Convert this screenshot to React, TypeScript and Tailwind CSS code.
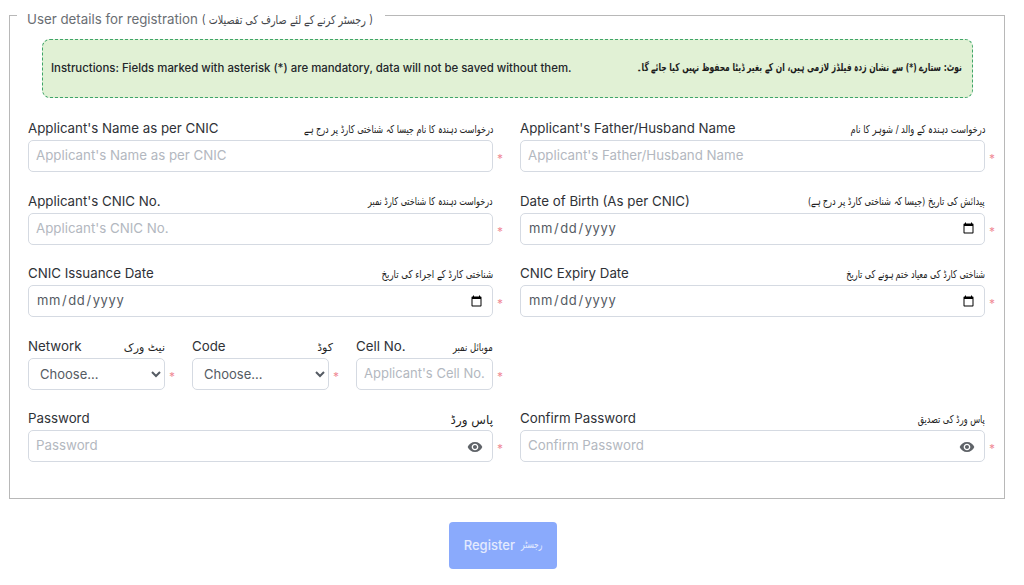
import React from 'react';

const sans = "font-['Inter','Noto_Sans',sans-serif]";
const urdu = "font-['DejaVu_Sans','Noto_Sans',sans-serif]";

function EyeIcon() {
  return (
    <svg viewBox="0 0 24 24" className="w-4 h-4 fill-[#5f6368]">
      <path d="M12 4.5C7 4.5 2.73 7.61 1 12c1.73 4.39 6 7.5 11 7.5s9.27-3.11 11-7.5c-1.73-4.39-6-7.5-11-7.5zM12 17c-2.76 0-5-2.24-5-5s2.24-5 5-5 5 2.24 5 5-2.24 5-5 5zm0-8c-1.66 0-3 1.34-3 3s1.34 3 3 3 3-1.34 3-3-1.34-3-3-3z" />
    </svg>
  );
}

function Star() {
  return <span className="absolute right-[-10px] top-[11px] text-[12px] leading-4 text-[#f08a96]">*</span>;
}

interface LabelProps {
  en: string;
  ur: string;
  urClass?: string;
}

function LabelRow({ en, ur, urClass = 'text-[11px] scale-x-[0.74]' }: LabelProps) {
  return (
    <div className="flex justify-between items-center h-[22px] whitespace-nowrap">
      <label className="mb-[2px] text-[13.3px] leading-5 text-[#2f3237]">{en}</label>
      <span dir="rtl" className={`${urdu} ${urClass} inline-block origin-right mt-[2px] text-[#222222]`}>{ur}</span>
    </div>
  );
}

const inputClass =
  'w-full h-8 rounded-[5px] border border-[#d5dae2] bg-white text-[#555b63] outline-none placeholder:text-[#b3b8c0]';

function TextField({ en, ur, urClass, eye }: LabelProps & { eye?: boolean }) {
  return (
    <div className="w-[465px]">
      <LabelRow en={en} ur={ur} urClass={urClass} />
      <div className="relative">
        <input type="text" placeholder={en} className={`${inputClass} text-[13.3px] px-[7px] pb-[2px]`} />
        {eye && (
          <span className="absolute right-[10px] top-[9px]">
            <EyeIcon />
          </span>
        )}
        <Star />
      </div>
    </div>
  );
}

function DateField({ en, ur, urClass }: LabelProps) {
  return (
    <div className="w-[465px]">
      <LabelRow en={en} ur={ur} urClass={urClass} />
      <div className="relative">
        <input type="date" className={`${inputClass} text-[13px] px-[7px] tracking-[0.6px]`} />
        <Star />
      </div>
    </div>
  );
}

function SelectField({ en, ur, urClass }: LabelProps) {
  return (
    <div>
      <LabelRow en={en} ur={ur} urClass={urClass} />
      <div className="relative">
        <select className={`${inputClass} text-[13px] pl-[7px] pr-[2px] text-[#6b7078]`} defaultValue="">
          <option value="">Choose...</option>
        </select>
        <Star />
      </div>
    </div>
  );
}

export default function App() {
  return (
    <div className={`${sans} w-[1024px] h-[585px] overflow-hidden bg-white`}>
      <div className="pl-[9px] pt-[3px]">
        <fieldset className="w-[996px] h-[496px] border border-[#b8b8b8] px-[18px]">
          <legend className="-ml-[11px] px-[10px] h-6 pt-2 text-[13.3px] leading-4 text-[#6a6e73] whitespace-nowrap">
            User details for registration{' '}
            <span className={`${urdu} inline-block -mr-[40px] origin-left scale-x-[0.8] text-[12px] text-[#44474b]`} dir="rtl">( رجسٹر کرنے کے لئے صارف کی تفصیلات )</span>
          </legend>

          <div className="mt-3 ml-[14px] w-[931px] h-[59px] rounded-lg border border-dashed border-[#3fa568] bg-[#e1f1d5] flex items-center justify-between pl-2 pr-[10px] whitespace-nowrap">
            <span className="shrink-0 text-[11.4px] font-medium text-[#23262a]">
              Instructions: Fields marked with asterisk (*) are mandatory, data will not be saved without them.
            </span>
            <span dir="rtl" className={`${urdu} shrink-0 -ml-[150px] inline-block origin-right scale-x-[0.686] text-[11px] font-bold text-[#1c1c1c]`}>
              نوٹ: ستارے (*) سے نشان زدہ فیلڈز لازمی ہیں، ان کے بغیر ڈیٹا محفوظ نہیں کیا جائے گا۔
            </span>
          </div>

          <div className="mt-[20px] grid grid-cols-[492px_465px] gap-y-[18.6px]">
            <TextField en="Applicant's Name as per CNIC" ur="درخواست دہندہ کا نام جیسا کہ شناختی کارڈ پر درج ہے" />
            <TextField en="Applicant's Father/Husband Name" ur="درخواست دہندہ کے والد / شوہر کا نام" urClass="text-[11px] scale-x-[0.76]" />
            <TextField en="Applicant's CNIC No." ur="درخواست دہندہ کا شناختی کارڈ نمبر" urClass="text-[11px] scale-x-[0.73]" />
            <DateField en="Date of Birth (As per CNIC)" ur="پیدائش کی تاریخ (جیسا کہ شناختی کارڈ پر درج ہے)" urClass="text-[11px] scale-x-[0.75]" />
            <DateField en="CNIC Issuance Date" ur="شناختی کارڈ کے اجراء کی تاریخ" urClass="text-[11px] scale-x-[0.78]" />
            <DateField en="CNIC Expiry Date" ur="شناختی کارڈ کی معیاد ختم ہونے کی تاریخ" urClass="text-[11px] scale-x-[0.73]" />

            <div className="w-[465px] grid grid-cols-[137px_137px_137px] gap-x-[27px]">
              <SelectField en="Network" ur="نیٹ ورک" urClass="text-[11px]" />
              <SelectField en="Code" ur="کوڈ" urClass="text-[11px] translate-x-[4px]" />
              <div>
                <LabelRow en="Cell No." ur="موبائل نمبر" urClass="text-[11px] scale-x-[0.77]" />
                <div className="relative">
                  <input type="text" placeholder="Applicant's Cell No." className={`${inputClass} text-[13px] px-[7px] pb-[2px]`} />
                  <Star />
                </div>
              </div>
            </div>
            <div />

            <TextField en="Password" ur="پاس ورڈ" urClass="text-[12px]" eye />
            <TextField en="Confirm Password" ur="پاس ورڈ کی تصدیق" eye />
          </div>
        </fieldset>
      </div>

      <div className="mt-[23px] flex justify-center pr-[18px]">
        <button className="w-[108px] h-[47px] rounded bg-[#8aaafc] text-[13px] font-medium text-[#e4eafe] whitespace-nowrap flex items-center justify-center gap-[6px]">
          Register
          <span className={`${urdu} inline-block -mx-[5px] scale-x-[0.68] text-[11px]`}>رجسٹر</span>
        </button>
      </div>
    </div>
  );
}
